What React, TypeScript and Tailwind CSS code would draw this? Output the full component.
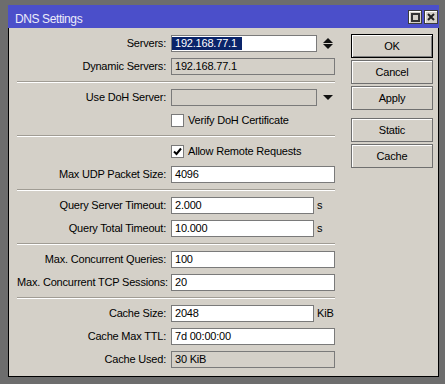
import type { ReactNode } from 'react';

type FieldProps = {
  value?: string;
  width?: string;
  disabled?: boolean;
  selected?: boolean;
};

function Field({ value = '', width = 'w-[164px]', disabled, selected }: FieldProps) {
  return (
    <div
      className={`${width} h-[17px] shrink-0 border border-[#7a7a7a] flex items-center overflow-hidden ${
        disabled ? 'bg-[#d4d0c8]' : 'bg-white'
      }`}
    >
      {selected ? (
        <span className="h-[13px] flex items-center bg-[#0a246a] text-white pl-[3px] pr-[5px]">{value}</span>
      ) : (
        <span className="pl-[3px]">{value}</span>
      )}
    </div>
  );
}

function Row({ label, children }: { label: string; children: ReactNode }) {
  return (
    <div className="flex h-[17px] items-center">
      <div className="w-[149px] shrink-0 text-right whitespace-nowrap">{label}</div>
      <div className="ml-[5px] flex items-center">{children}</div>
    </div>
  );
}

function CheckRow({ label, checked }: { label: string; checked?: boolean }) {
  return (
    <div className="flex h-[17px] items-center pl-[154px]">
      <div className="w-[13px] h-[13px] border border-[#7a7a7a] bg-white flex items-center justify-center">
        {checked && (
          <svg width="9" height="9" viewBox="0 0 9 9">
            <path d="M1 4.5 L3.5 7 L8 1.5" fill="none" stroke="#000" strokeWidth="2" />
          </svg>
        )}
      </div>
      <span className="ml-[4px]">{label}</span>
    </div>
  );
}

function Separator() {
  return <div className="h-[2px] border-t border-t-[#a09c94] border-b border-b-white" />;
}

function Spinner() {
  return (
    <svg className="ml-[6px]" width="10" height="11" viewBox="0 0 10 11">
      <path d="M5 0 L10 5 L0 5 Z" fill="#111" />
      <path d="M0 6 L10 6 L5 11 Z" fill="#111" />
    </svg>
  );
}

function DropArrow() {
  return (
    <svg className="ml-[6px]" width="10" height="6" viewBox="0 0 10 6">
      <path d="M0 0 L10 0 L5 5 Z" fill="#111" />
    </svg>
  );
}

function Button({ label, primary }: { label: string; primary?: boolean }) {
  return (
    <div
      className={`h-[24px] w-[82px] flex items-center justify-center border ${
        primary
          ? 'border-black shadow-[inset_1px_1px_0_#ffffff,inset_-1px_-1px_0_#808080]'
          : 'border-[#6f6f6f] shadow-[inset_1px_1px_0_#ffffff]'
      } bg-[#d4d0c8]`}
    >
      {label}
    </div>
  );
}

function TitleButton({ children }: { children: ReactNode }) {
  return (
    <div className="w-[14px] h-[14px] bg-[#d4d0c8] border border-[#3c3c3c] shadow-[inset_1px_1px_0_#ffffff] flex items-center justify-center">
      {children}
    </div>
  );
}

export default function App() {
  return (
    <div className="w-[445px] h-[384px] bg-[#6d6d6d] pl-[8px] pr-[6px] pt-[5px] pb-[7px] font-['Liberation_Sans',Arial,sans-serif] text-[11px] tracking-[-0.2px] leading-[13px] text-black">
      <div className="h-full flex flex-col">
        {/* Title bar */}
        <div className="h-[23px] bg-[#4b4fca] flex items-start justify-between">
          <span className="pt-[8px] pl-[7px] text-[12px] tracking-[-0.4px] text-[#ececfa]">DNS Settings</span>
          <div className="flex gap-[2px] mt-[5px] mr-[1px]">
            <TitleButton>
              <div className="w-[9px] h-[9px] border-2 border-[#333]" />
            </TitleButton>
            <TitleButton>
              <svg width="8" height="8" viewBox="0 0 8 8">
                <path d="M1 1 L7 7 M7 1 L1 7" stroke="#222" strokeWidth="2" />
              </svg>
            </TitleButton>
          </div>
        </div>

        {/* Body */}
        <div className="flex-1 bg-[#d4d0c8] border-l border-r border-b border-black flex items-start pl-[8px]">
          <div className="w-[318px] pt-[7px] flex flex-col gap-[6px]">
            <Row label="Servers:">
              <Field value="192.168.77.1" width="w-[146px]" selected />
              <Spinner />
            </Row>
            <Row label="Dynamic Servers:">
              <Field value="192.168.77.1" disabled />
            </Row>
            <Separator />
            <Row label="Use DoH Server:">
              <Field width="w-[146px]" disabled />
              <DropArrow />
            </Row>
            <CheckRow label="Verify DoH Certificate" />
            <Separator />
            <CheckRow label="Allow Remote Requests" checked />
            <Row label="Max UDP Packet Size:">
              <Field value="4096" />
            </Row>
            <Separator />
            <Row label="Query Server Timeout:">
              <Field value="2.000" width="w-[143px]" />
              <span className="ml-[3px]">s</span>
            </Row>
            <Row label="Query Total Timeout:">
              <Field value="10.000" width="w-[143px]" />
              <span className="ml-[3px]">s</span>
            </Row>
            <Separator />
            <Row label="Max. Concurrent Queries:">
              <Field value="100" />
            </Row>
            <Row label="Max. Concurrent TCP Sessions:">
              <Field value="20" />
            </Row>
            <Separator />
            <Row label="Cache Size:">
              <Field value="2048" width="w-[143px]" />
              <span className="ml-[3px]">KiB</span>
            </Row>
            <Row label="Cache Max TTL:">
              <Field value="7d 00:00:00" />
            </Row>
            <Row label="Cache Used:">
              <Field value="30 KiB" disabled />
            </Row>
          </div>

          <div className="ml-[16px] pt-[6px] flex flex-col gap-[2px]">
            <Button label="OK" primary />
            <Button label="Cancel" />
            <Button label="Apply" />
            <div className="h-[4px]" />
            <Button label="Static" />
            <Button label="Cache" />
          </div>
        </div>
      </div>
    </div>
  );
}
